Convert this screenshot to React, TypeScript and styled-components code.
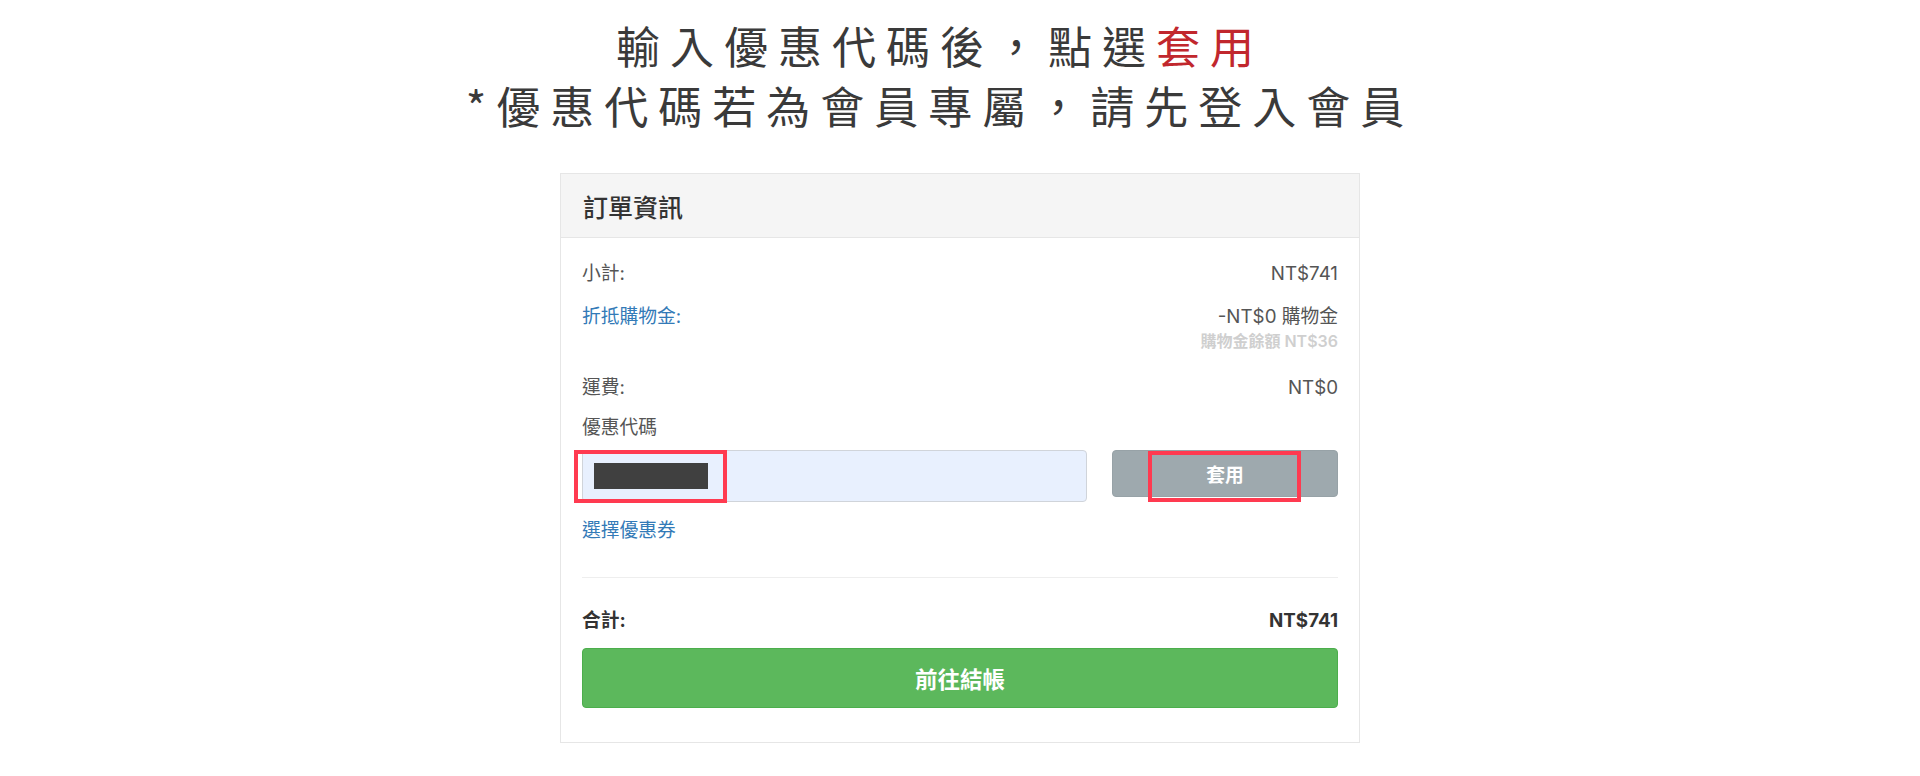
import React from "react";
import styled, { createGlobalStyle } from "styled-components";

const GlobalStyle = createGlobalStyle`
  html, body {
    margin: 0;
    padding: 0;
    background: #ffffff;
  }
  body {
    font-family: Inter, "Noto Sans CJK TC", sans-serif;
    color: #555555;
  }
  * { box-sizing: border-box; }
`;

const Page = styled.div`
  display: flex;
  flex-direction: column;
  align-items: center;
  padding-bottom: 34px;
`;

const Heading = styled.h1`
  margin: 0;
  padding: 15px 40px 0 0;
  font-family: "Noto Sans CJK TC", sans-serif;
  font-weight: 400;
  font-size: 44px;
  line-height: 60px;
  letter-spacing: 10px;
  color: #3a3a3a;
  text-align: center;
`;

const Accent = styled.span`
  color: #c1272d;
`;

const Panel = styled.section`
  width: 800px;
  margin-top: 38px;
  border: 1px solid #e6e6e6;
  background: #ffffff;
`;

const PanelHeader = styled.header`
  height: 64px;
  display: flex;
  align-items: center;
  padding: 0 22px;
  background: #f5f5f5;
  border-bottom: 1px solid #e6e6e6;
  font-family: "Noto Sans CJK TC", sans-serif;
  font-size: 25px;
  font-weight: 500;
  color: #333333;
`;

const PanelBody = styled.div`
  padding: 22px 21px 34px 21px;
  display: flex;
  flex-direction: column;
`;

const SummaryRow = styled.div<{ $gap?: number }>`
  display: flex;
  justify-content: space-between;
  align-items: flex-start;
  margin-top: ${(p) => p.$gap ?? 0}px;
  font-size: 18.75px;
  line-height: 27px;
`;

const RowLabel = styled.span<{ $link?: boolean; $strong?: boolean }>`
  color: ${(p) => (p.$link ? "#337ab7" : p.$strong ? "#333333" : "#555555")};
  font-weight: ${(p) => (p.$strong ? 700 : 400)};
`;

const RowValue = styled.div<{ $strong?: boolean }>`
  display: flex;
  flex-direction: column;
  align-items: flex-end;
  color: ${(p) => (p.$strong ? "#333333" : "#555555")};
  font-weight: ${(p) => (p.$strong ? 700 : 400)};
`;

const SubNote = styled.span`
  margin-top: 1px;
  font-size: 16px;
  line-height: 21px;
  font-weight: 600;
  color: #cfcfcf;
`;

const FieldLabel = styled.label`
  margin-top: 13px;
  font-size: 18.75px;
  line-height: 27px;
  color: #555555;
`;

const CouponGrid = styled.div`
  margin-top: 9px;
  display: grid;
  grid-template-columns: 505px 1fr;
  column-gap: 25px;
  align-items: start;
`;

const CodeField = styled.div`
  position: relative;
  height: 52px;
  display: flex;
  align-items: center;
  padding-left: 11px;
  background: #e8f0fe;
  border: 1px solid #d0d4da;
  border-radius: 4px;
`;

const Redaction = styled.span`
  display: block;
  width: 114px;
  height: 26px;
  background: #404040;
`;

const Annotation = styled.span<{ $left: number; $top: number; $w: number; $h: number }>`
  position: absolute;
  left: ${(p) => p.$left}px;
  top: ${(p) => p.$top}px;
  width: ${(p) => p.$w}px;
  height: ${(p) => p.$h}px;
  border: 4px solid #ff3a50;
  pointer-events: none;
`;

const ApplyButton = styled.button`
  position: relative;
  height: 47px;
  width: 100%;
  border: 1px solid #97a2a7;
  border-radius: 4px;
  background: #9ea9ae;
  color: #ffffff;
  font-family: "Noto Sans CJK TC", sans-serif;
  font-size: 18.75px;
  font-weight: 700;
  cursor: pointer;
`;

const TextLink = styled.a`
  margin-top: 15px;
  align-self: flex-start;
  font-size: 18.75px;
  line-height: 27px;
  color: #337ab7;
  text-decoration: none;
`;

const Divider = styled.hr`
  margin: 33px 0 0 0;
  border: 0;
  border-top: 1px solid #eeeeee;
`;

const CheckoutButton = styled.button`
  margin-top: 14px;
  height: 60px;
  width: 100%;
  border: 1px solid #4cae4c;
  border-radius: 4px;
  background: #5cb85c;
  color: #ffffff;
  font-family: "Noto Sans CJK TC", sans-serif;
  font-size: 22.5px;
  font-weight: 700;
  cursor: pointer;
`;

export default function App() {
  return (
    <>
      <GlobalStyle />
      <Page>
        <Heading>
          輸入優惠代碼後，點選<Accent>套用</Accent>
          <br />
          *優惠代碼若為會員專屬，請先登入會員
        </Heading>
        <Panel>
          <PanelHeader>訂單資訊</PanelHeader>
          <PanelBody>
            <SummaryRow>
              <RowLabel>小計:</RowLabel>
              <RowValue>NT$741</RowValue>
            </SummaryRow>
            <SummaryRow $gap={16}>
              <RowLabel $link>折抵購物金:</RowLabel>
              <RowValue>
                <span>-NT$0 購物金</span>
                <SubNote>購物金餘額 NT$36</SubNote>
              </RowValue>
            </SummaryRow>
            <SummaryRow $gap={22}>
              <RowLabel>運費:</RowLabel>
              <RowValue>NT$0</RowValue>
            </SummaryRow>
            <FieldLabel>優惠代碼</FieldLabel>
            <CouponGrid>
              <CodeField>
                <Redaction />
                <Annotation $left={-9} $top={-1} $w={153} $h={53} />
              </CodeField>
              <ApplyButton>
                套用
                <Annotation $left={35} $top={0} $w={153} $h={51} />
              </ApplyButton>
            </CouponGrid>
            <TextLink href="#">選擇優惠券</TextLink>
            <Divider />
            <SummaryRow $gap={29}>
              <RowLabel $strong>合計:</RowLabel>
              <RowValue $strong>NT$741</RowValue>
            </SummaryRow>
            <CheckoutButton>前往結帳</CheckoutButton>
          </PanelBody>
        </Panel>
      </Page>
    </>
  );
}
